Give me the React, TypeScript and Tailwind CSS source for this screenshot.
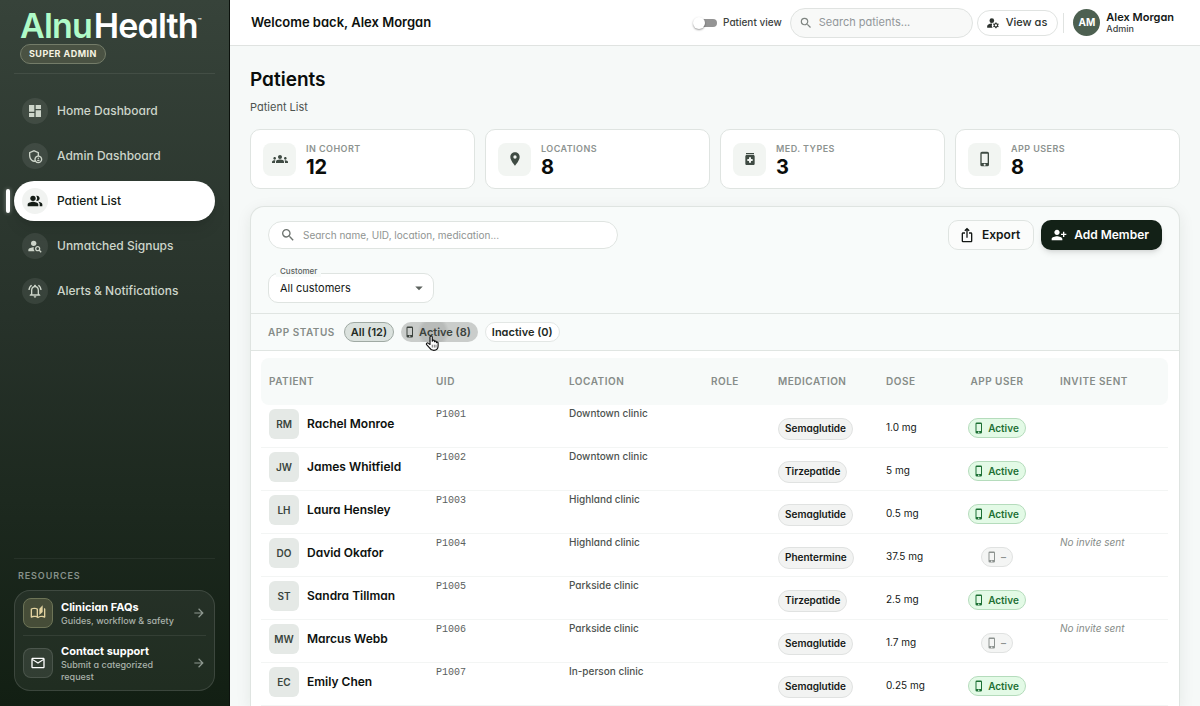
import { useState } from "react";
import clsx from "clsx";
import type { IconType } from "react-icons";
import {
  MdArrowDropDown,
  MdArrowForward,
  MdDashboard,
  MdGroups,
  MdIosShare,
  MdLocationOn,
  MdManageAccounts,
  MdMedication,
  MdOutlineAdminPanelSettings,
  MdOutlineAutoStories,
  MdOutlineMail,
  MdOutlineNotificationsActive,
  MdPeopleAlt,
  MdPersonAddAlt1,
  MdPersonSearch,
  MdPhoneIphone,
  MdSearch,
} from "react-icons/md";

const navItems: { icon: IconType; label: string; active?: boolean }[] = [
  { icon: MdDashboard, label: "Home Dashboard" },
  { icon: MdOutlineAdminPanelSettings, label: "Admin Dashboard" },
  { icon: MdPeopleAlt, label: "Patient List", active: true },
  { icon: MdPersonSearch, label: "Unmatched Signups" },
  { icon: MdOutlineNotificationsActive, label: "Alerts & Notifications" },
];

const stats: { icon: IconType; label: string; value: number }[] = [
  { icon: MdGroups, label: "IN COHORT", value: 12 },
  { icon: MdLocationOn, label: "LOCATIONS", value: 8 },
  { icon: MdMedication, label: "MED. TYPES", value: 3 },
  { icon: MdPhoneIphone, label: "APP USERS", value: 8 },
];

const patients = [
  { initials: "RM", name: "Rachel Monroe", uid: "P1001", location: "Downtown clinic", med: "Semaglutide", dose: "1.0 mg", active: true },
  { initials: "JW", name: "James Whitfield", uid: "P1002", location: "Downtown clinic", med: "Tirzepatide", dose: "5 mg", active: true },
  { initials: "LH", name: "Laura Hensley", uid: "P1003", location: "Highland clinic", med: "Semaglutide", dose: "0.5 mg", active: true },
  { initials: "DO", name: "David Okafor", uid: "P1004", location: "Highland clinic", med: "Phentermine", dose: "37.5 mg", active: false },
  { initials: "ST", name: "Sandra Tillman", uid: "P1005", location: "Parkside clinic", med: "Tirzepatide", dose: "2.5 mg", active: true },
  { initials: "MW", name: "Marcus Webb", uid: "P1006", location: "Parkside clinic", med: "Semaglutide", dose: "1.7 mg", active: false },
  { initials: "EC", name: "Emily Chen", uid: "P1007", location: "In-person clinic", med: "Semaglutide", dose: "0.25 mg", active: true },
];

const columns = [
  { label: "PATIENT", width: "w-[167px]" },
  { label: "UID", width: "w-[133px]" },
  { label: "LOCATION", width: "w-[142px]" },
  { label: "ROLE", width: "w-[67px]" },
  { label: "MEDICATION", width: "w-[108px]" },
  { label: "DOSE", width: "w-[64px]" },
  { label: "APP USER", width: "w-[110px]", center: true },
  { label: "INVITE SENT", width: "w-[116px]" },
];

function Sidebar() {
  return (
    <aside className="flex h-full w-[230px] shrink-0 flex-col border-r border-[#0c120d] bg-linear-to-b from-[#37433a] via-[#27322a] via-45% to-[#121f13] px-3.5 pb-[15px]">
      <div className="border-b border-white/8 pt-2 pb-[9px] pl-1.5">
        <div className="flex items-start text-[34px] leading-9 font-semibold tracking-tight text-white">
          <span className="text-[#b0fbc8]">Alnu</span>
          <span className="ml-0.5">Health</span>
          <span className="pt-2.5 text-[6px] leading-none">™</span>
        </div>
        <span className="flex h-5 w-fit items-center rounded-full border border-[#747c69] bg-[#4a5243] px-2 text-[9px] font-bold tracking-wider text-[#f6f3e2]">
          SUPER ADMIN
        </span>
      </div>

      <nav className="mt-[17px] flex flex-col gap-[5px]">
        {navItems.map(({ icon: Icon, label, active }) => (
          <a
            key={label}
            href="#"
            className={clsx(
              "relative flex h-10 items-center gap-[9px] rounded-full pl-2 text-[12px] font-medium",
              active ? "bg-white text-[#141c16] shadow-lg" : "text-[#cdd5ca]",
            )}
          >
            {active && <span className="absolute top-2 -left-2 h-6 w-1 rounded-full bg-white shadow-[0_0_4px_rgba(255,255,255,0.4)]" />}
            <span className={clsx("flex size-[26px] items-center justify-center rounded-full", active ? "bg-[#f1f3f1]" : "bg-white/8")}>
              <Icon className="size-4" />
            </span>
            {label}
          </a>
        ))}
      </nav>

      <div className="mt-auto border-t border-white/6 pt-[11px]">
        <h2 className="px-1 text-[9px] leading-3 font-semibold tracking-widest text-[#87918a]">RESOURCES</h2>
        <div className="mt-2 rounded-2xl border border-white/12 bg-white/6 px-2">
          <ResourceLink icon={MdOutlineAutoStories} title="Clinician FAQs" text="Guides, workflow & safety" gold />
          <div className="border-t border-white/8" />
          <ResourceLink icon={MdOutlineMail} title="Contact support" text="Submit a categorized request" />
        </div>
      </div>
    </aside>
  );
}

function ResourceLink({ icon: Icon, title, text, gold }: { icon: IconType; title: string; text: string; gold?: boolean }) {
  return (
    <a href="#" className="flex items-center gap-2 py-[7px]">
      <span
        className={clsx(
          "flex size-[30px] shrink-0 items-center justify-center rounded-lg border",
          gold ? "border-[#6d7457] bg-[#464d38] text-[#e3d3a0]" : "border-white/12 bg-white/8 text-white",
        )}
      >
        <Icon className="size-4" />
      </span>
      <span className="min-w-0 flex-1">
        <span className="block text-[11px] leading-4 font-bold text-white">{title}</span>
        <span className="block text-[9px] leading-3 font-medium text-[#a9b2aa]">{text}</span>
      </span>
      <MdArrowForward className="size-3.5 shrink-0 text-[#8f9991]" />
    </a>
  );
}

function TopBar() {
  const [patientView, setPatientView] = useState(false);
  return (
    <header className="flex h-[46px] shrink-0 items-center border-b border-[#e0e3e1] bg-white pr-[26px] pl-[21px]">
      <p className="text-[13px] font-semibold text-[#0d110e]">Welcome back, Alex Morgan</p>
      <label className="ml-auto flex items-center gap-1.5 text-[10px] font-medium text-[#3c423e]">
        <input
          type="checkbox"
          checked={patientView}
          onChange={(e) => setPatientView(e.target.checked)}
          className="peer sr-only"
        />
        <span className="flex h-2 w-[22px] items-center rounded-full bg-[#949494] peer-checked:justify-end">
          <span className="-ml-0.5 size-3 shrink-0 rounded-full bg-white shadow-[0_1px_2px_rgba(0,0,0,0.4)]" />
        </span>
        Patient view
      </label>
      <div className="ml-2 flex h-[30px] w-[183px] items-center gap-1.5 rounded-full border border-[#e0e3e1] bg-[#f8f9f8] px-2">
        <MdSearch className="size-3.5 shrink-0 text-[#7e8480]" />
        <input
          aria-label="Search patients"
          placeholder="Search patients..."
          className="w-full min-w-0 bg-transparent text-[11px] outline-none placeholder:text-[#92979a]"
        />
      </div>
      <button className="ml-1 flex h-[26px] items-center gap-1.5 rounded-full border border-[#e0e3e1] bg-white px-2 pr-2.5 text-[11px] font-medium text-[#2c322e]">
        <MdManageAccounts className="size-3.5" />
        View as
      </button>
      <span className="mx-[5px] h-5 w-px bg-[#e0e3e1]" />
      <span className="ml-1 flex size-[27px] items-center justify-center rounded-full bg-[#4d6051] text-[10px] font-bold text-white">AM</span>
      <div className="ml-1.5">
        <p className="text-[11px] leading-3 font-semibold text-[#141816]">Alex Morgan</p>
        <p className="text-[9px] leading-3 font-medium text-[#3c423e]">Admin</p>
      </div>
    </header>
  );
}

function StatCard({ icon: Icon, label, value }: { icon: IconType; label: string; value: number }) {
  return (
    <div className="flex h-[60px] items-center gap-2.5 rounded-[10px] border border-[#dfe4e1] bg-white px-3">
      <span className="flex size-[33px] items-center justify-center rounded-lg bg-[#f2f5f2] text-[#3f4b43]">
        <Icon className="size-4" />
      </span>
      <div className="pt-[3px]">
        <p className="text-[9px] leading-3 font-semibold tracking-wider text-[#8d9390]">{label}</p>
        <p className="text-[20px] leading-6 font-bold text-[#0a0d0b]">{value}</p>
      </div>
    </div>
  );
}

function Toolbar() {
  return (
    <div className="px-[17px] pt-[13px] pb-2.5">
      <div className="flex items-center justify-between">
        <div className="flex h-7 w-[350px] items-center gap-[7px] rounded-full border border-[#dfe4e1] bg-white px-[11px]">
          <MdSearch className="size-4 shrink-0 text-[#6d736f]" />
          <input
            aria-label="Search patient list"
            placeholder="Search name, UID, location, medication..."
            className="w-full min-w-0 bg-transparent text-[10px] outline-none placeholder:text-[#8f9492]"
          />
        </div>
        <div className="flex items-center gap-[7px]">
          <button className="flex h-[30px] items-center gap-[7px] rounded-[10px] border border-[#dfe4e1] bg-[#fbfcfb] pr-[13px] pl-2.5 text-[12px] font-semibold text-[#141816]">
            <MdIosShare className="size-4" />
            Export
          </button>
          <button className="flex h-[30px] items-center gap-[7px] rounded-[10px] bg-[#132117] pr-[13px] pl-2.5 text-[12px] font-semibold text-white shadow-md">
            <MdPersonAddAlt1 className="size-4" />
            Add Member
          </button>
        </div>
      </div>

      <div className="relative mt-[23px] w-[166px]">
        <label htmlFor="customer" className="absolute -top-2 left-2 bg-[#f8fbfa] px-1 text-[8px] leading-3 font-medium text-[#5b615d]">
          Customer
        </label>
        <select
          id="customer"
          className="h-[30px] w-full appearance-none rounded-[10px] border border-[#dfe4e1] bg-white pl-[11px] text-[11px] text-[#141816]"
        >
          <option>All customers</option>
        </select>
        <MdArrowDropDown className="pointer-events-none absolute top-1.5 right-1.5 size-[18px] text-[#5b615d]" />
      </div>
    </div>
  );
}

function HandCursor() {
  return (
    <svg viewBox="0 0 24 28" className="pointer-events-none absolute top-[13px] left-6 h-4 w-3.5">
      <path
        d="M8.5 16.5V3.8a2 2 0 0 1 4 0V11l.2-1a1.9 1.9 0 0 1 3.6.6v1a1.8 1.8 0 0 1 3.4.7v1a1.6 1.6 0 0 1 3 .8V19c0 5-3 8-7.5 8-3.7 0-5.7-1.5-7.5-4.5L2.6 17a2 2 0 0 1 3.2-2.4z"
        fill="#fff"
        stroke="#111"
        strokeWidth="2"
        strokeLinejoin="round"
      />
      <path d="M12.5 17v5M16 17v5M19 17v5" stroke="#111" strokeWidth="1" />
    </svg>
  );
}

function StatusFilter() {
  return (
    <div className="flex items-center gap-[7px] border-y border-[#e0e5e2] px-[17px] py-2">
      <span className="mr-0.5 text-[10px] font-semibold tracking-wider text-[#868c88]">APP STATUS</span>
      <button className="h-5 rounded-full border border-[#9fa9a3] bg-[#dbe2de] px-1.5 text-[11px] font-semibold text-[#232a25]">
        All (12)
      </button>
      <button className="relative flex h-5 items-center gap-[3px] rounded-full bg-[radial-gradient(circle_at_42%_50%,#b8bbb9_12px,#cacdcb_16px)] pr-[7px] pl-[3px] text-[11px] font-semibold text-[#3b423d]">
        <MdPhoneIphone className="size-3" />
        Active (8)
        <HandCursor />
      </button>
      <button className="h-5 rounded-full border border-[#e3e7e5] bg-white px-1.5 text-[11px] font-semibold text-[#232a25]">
        Inactive (0)
      </button>
    </div>
  );
}

function PatientTable() {
  return (
    <div className="bg-white pt-[7px] pr-[11px] pl-2.5">
      <table className="w-full table-fixed border-separate border-spacing-0 text-left">
        <thead>
          <tr className="h-[47px]">
            {columns.map(({ label, width, center }) => (
              <th
                key={label}
                className={clsx(
                  "bg-[#f7faf9] px-2 text-[10px] font-semibold tracking-wider text-[#868c88] first:rounded-l-lg last:rounded-r-lg",
                  width,
                  center && "text-center",
                )}
              >
                {label}
              </th>
            ))}
          </tr>
        </thead>
        <tbody>
          {patients.map((p) => (
            <tr key={p.uid} className="h-[43px] align-top *:border-b *:border-[#f3f5f4] *:px-2">
              <td className="pt-1">
                <div className="flex items-center gap-2">
                  <span className="flex size-[30px] items-center justify-center rounded-md bg-[#e5e9e6] text-[10px] font-semibold text-[#3a453d]">
                    {p.initials}
                  </span>
                  <span className="text-[12px] font-semibold whitespace-nowrap text-[#0d110e]">{p.name}</span>
                </div>
              </td>
              <td className="pt-0.5 font-['Liberation_Mono',monospace] text-[10px] leading-4 text-[#5b615d]">{p.uid}</td>
              <td className="text-[10px] leading-4 font-medium text-[#4d534f]">{p.location}</td>
              <td />
              <td className="pt-[9px]">
                <span className="inline-flex h-[22px] items-center rounded-full border border-[#e0e2e1] bg-[#f2f3f2] px-1.5 text-[10px] font-semibold text-[#141816]">
                  {p.med}
                </span>
              </td>
              <td className="pt-3.5 text-[10px] leading-4 whitespace-nowrap text-[#141816]">{p.dose}</td>
              <td className="pt-[11px] text-center">
                <span
                  className={clsx(
                    "inline-flex h-5 items-center gap-[3px] rounded-full border pr-1.5 pl-1 text-[10px] font-semibold",
                    p.active ? "border-[#b5dcbc] bg-[#e3fae6] text-[#1d7034]" : "border-[#e0e2e1] bg-[#f4f5f4] text-[#8d9390]",
                  )}
                >
                  <MdPhoneIphone className="size-3" />
                  {p.active ? "Active" : "–"}
                </span>
              </td>
              <td className="text-[10px] leading-4 text-[#868c88] italic">{!p.active && "No invite sent"}</td>
            </tr>
          ))}
        </tbody>
      </table>
    </div>
  );
}

export default function App() {
  return (
    <div className="flex h-screen overflow-hidden bg-[#f6f9f8] font-[Inter,'Open_Sans',sans-serif] [font-feature-settings:'cv11']">
      <Sidebar />
      <div className="flex min-w-0 flex-1 flex-col">
        <TopBar />
        <main className="flex-1 overflow-y-auto px-5 pt-5 [scrollbar-width:none]">
          <h1 className="text-[19px] leading-7 font-semibold text-[#0a0d0b]">Patients</h1>
          <p className="mt-[5px] text-[11px] leading-4 text-[#4d534f]">Patient List</p>
          <section className="mt-3.5 grid grid-cols-4 gap-2.5">
            {stats.map((s) => (
              <StatCard key={s.label} {...s} />
            ))}
          </section>
          <section className="mt-[17px] overflow-hidden rounded-t-[14px] border border-b-0 border-[#dfe4e1] bg-[#f8fbfa] shadow-[0_4px_16px_rgba(20,40,30,0.08)]">
            <Toolbar />
            <StatusFilter />
            <PatientTable />
          </section>
        </main>
      </div>
    </div>
  );
}
